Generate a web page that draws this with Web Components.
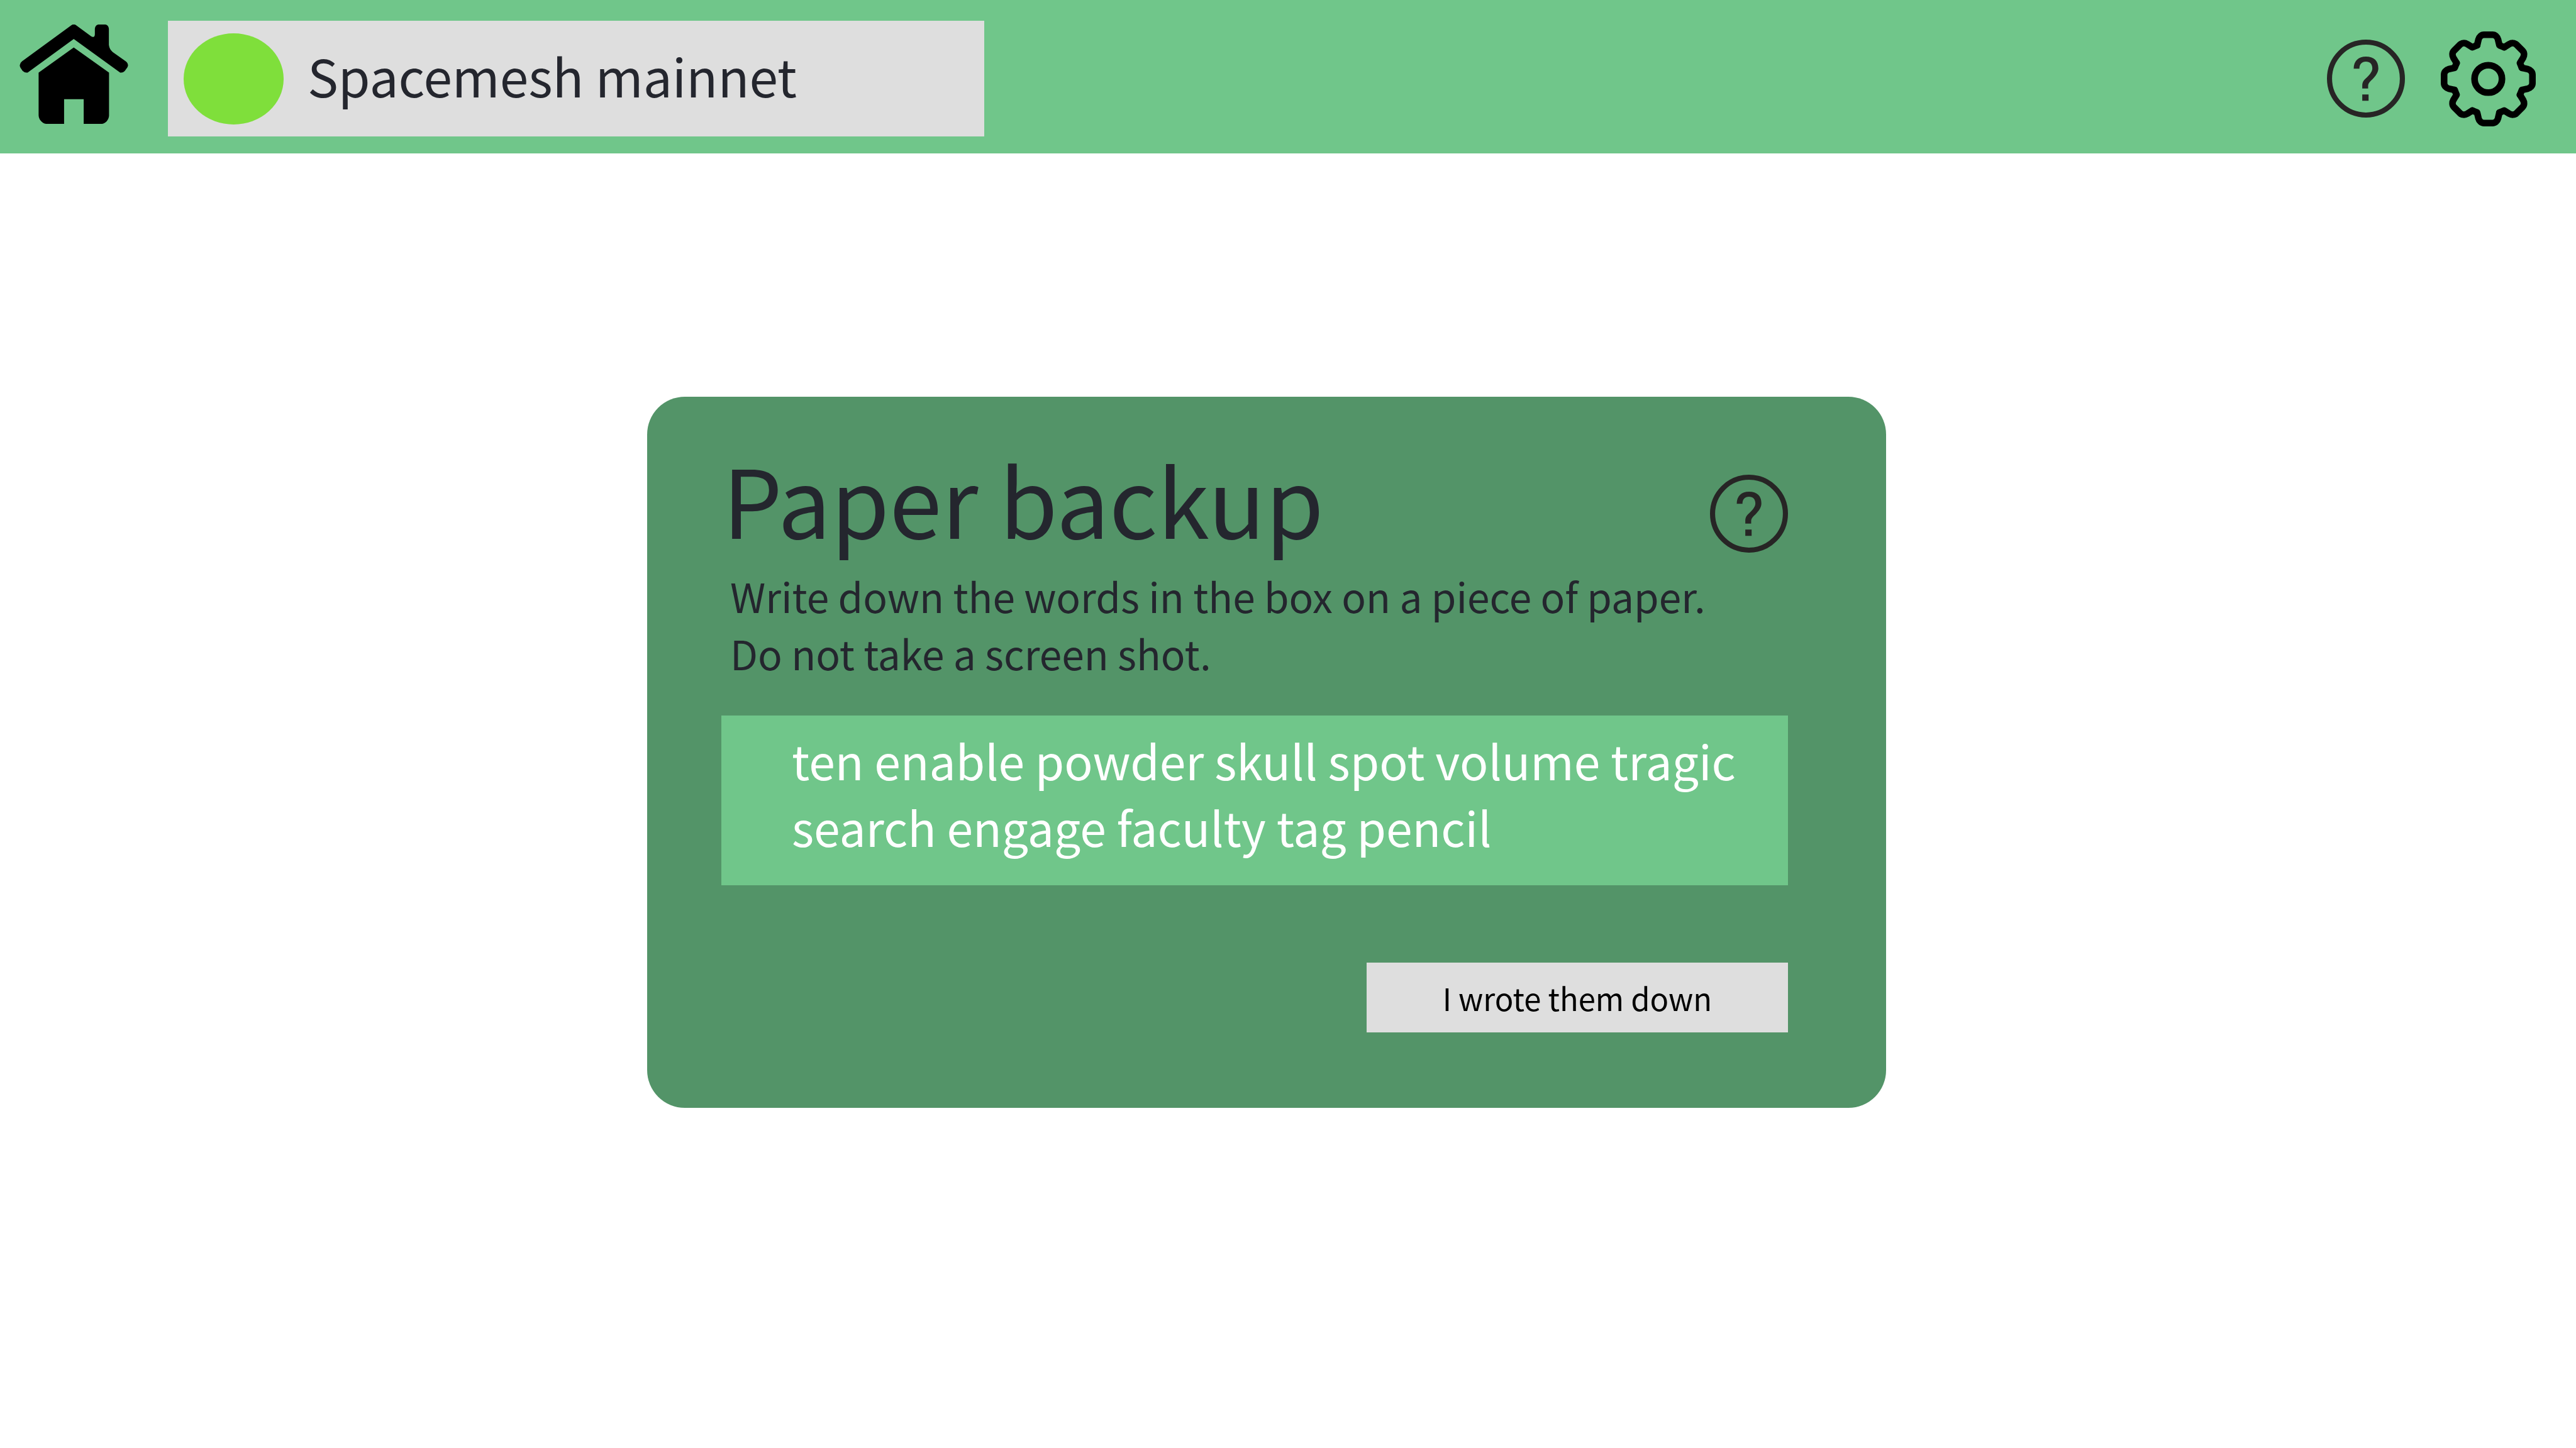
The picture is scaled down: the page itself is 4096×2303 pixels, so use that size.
<!DOCTYPE html>
<html lang="en">
<head>
<meta charset="utf-8">
<meta name="viewport" content="width=device-width, initial-scale=1">
<title>Paper backup</title>
<style>
  html, body { margin: 0; min-height: 100%; background: #ffffff; }
  body {
    font-family: "Noto Sans CJK SC", "Noto Sans", sans-serif;
    color: #24262e;
    --leaf: #70c68a;
    --moss: #539468;
    --stone: #dedede;
    --online: #7fdf3b;
  }
</style>
</head>
<body>
<wallet-app></wallet-app>

<template id="wallet-app">
  <style>
    :host { display: block; }
    /* The card column sits slightly left of the window's centre. */
    main {
      display: grid;
      grid-template-columns: 1029fr minmax(0, 1970fr) 1097fr;
      padding: 387px 0;
    }
    backup-card { grid-column: 2; }
  </style>
  <app-header>
    <network-status>Spacemesh mainnet</network-status>
  </app-header>
  <main>
    <backup-card>
      <span slot="title">Paper backup</span>
      <span slot="hint">Write down the words in the box on a piece of paper.<br>Do not take a screen shot.</span>
      <seed-words>ten enable powder skull spot volume tragic search engage faculty tag pencil</seed-words>
      <action-button slot="action">I wrote them down</action-button>
    </backup-card>
  </main>
</template>

<template id="app-header">
  <style>
    :host { display: block; }
    header {
      display: flex;
      align-items: center;
      padding: 33px 64px 27px 31px;
      background: var(--leaf);
    }
    a { display: block; align-self: flex-start; margin: 6px 63px 0 0; color: #000000; }
    a svg { display: block; width: 173px; height: 158px; }
    .tools { display: flex; align-items: center; gap: 57px; margin-left: auto; }
    ::slotted(network-status) { flex: 0 1 1298px; }
  </style>
  <header>
    <a href="#" aria-label="Home">
      <svg viewBox="42 42 718 659" fill="currentColor" aria-hidden="true">
        <path d="M388 44Q400 39 412 44L514 119Q526 128 534 123Q540 119 540 108V70Q542 46 563 42H610Q631 46 633 70V178Q637 208 658 224L742 284Q760 297 760 314Q758 325 750 334L738 351Q725 364 708 361L400 138L94 361Q75 364 61 350L48 331Q42 322 42 312Q44 296 57 286Z"/>
        <path d="M400 194L634 361V648C632 675 612 697 588 701H466V537H336V701H216C190 698 168 672 167 645V361Z"/>
      </svg>
    </a>
    <slot></slot>
    <div class="tools">
      <help-button></help-button>
      <settings-button></settings-button>
    </div>
  </header>
</template>

<template id="network-status">
  <style>
    :host {
      display: flex;
      align-items: center;
      gap: 38px;
      box-sizing: border-box;
      min-width: 0;
      height: 184px;
      padding: 0 25px;
      background: var(--stone);
      font-size: 82px;
      line-height: 120px;
      white-space: nowrap;
    }
    i { flex: none; width: 159px; height: 145px; border-radius: 50%; background: var(--online); }
    span { padding-bottom: 11px; }
  </style>
  <i></i><span><slot></slot></span>
</template>

<template id="help-button">
  <style>
    :host { display: block; flex: none; }
    button { display: block; padding: 0; border: 0; background: none; color: #272525; cursor: pointer; }
    svg { display: block; width: 124px; height: 124px; }
  </style>
  <button type="button" aria-label="Help">
    <svg viewBox="29 22 519 519" aria-hidden="true">
      <circle cx="288.500" cy="281.500" r="242.500" fill="none" stroke="currentColor" stroke-width="34"/>
      <path fill="currentColor" d="M207 216C207 164 239 135 288 135C341 135 371 163 371 213C371 242 350 266 331 287C315 303 303 312 303 332V347H264V332C264 309 270 297 285 283C307 261 331 238 331 213C331 184 315 168 288 168C261 168 245 185 245 216ZM264 387H306V429H264Z"/>
    </svg>
  </button>
</template>

<template id="settings-button">
  <style>
    :host { display: block; flex: none; }
    button { display: block; padding: 0; border: 0; background: none; color: #000000; cursor: pointer; }
    svg { display: block; width: 151px; height: 151px; }
  </style>
  <button type="button" aria-label="Settings">
    <svg viewBox="-315 -315 630 630" fill="none" stroke="currentColor" stroke-width="44" stroke-linecap="round" stroke-linejoin="round" aria-hidden="true">
      <defs>
        <path id="tooth" d="M-74 -223L-65 -261C-60 -280 -46 -293 -28 -293H28C46 -293 60 -280 65 -261L74 -223L106 -210"/>
      </defs>
      <use href="#tooth"/>
      <use href="#tooth" transform="rotate(45)"/>
      <use href="#tooth" transform="rotate(90)"/>
      <use href="#tooth" transform="rotate(135)"/>
      <use href="#tooth" transform="rotate(180)"/>
      <use href="#tooth" transform="rotate(225)"/>
      <use href="#tooth" transform="rotate(270)"/>
      <use href="#tooth" transform="rotate(315)"/>
      <circle r="91"/>
    </svg>
  </button>
</template>

<template id="backup-card">
  <style>
    :host {
      display: flex;
      flex-direction: column;
      box-sizing: border-box;
      padding: 51px 156px 120px 118px;
      border-radius: 60px;
      background: var(--moss);
    }
    .head { display: flex; align-items: flex-end; justify-content: space-between; }
    h1 { margin: 0; padding-left: 2px; font-size: 150px; font-weight: 400; line-height: 220px; }
    help-button { padding-bottom: 23px; }
    p { margin: 0; padding-left: 14px; font-size: 64px; line-height: 91px; }
    ::slotted(seed-words) { margin-top: 54px; }
    ::slotted(action-button) { align-self: flex-end; margin-top: 123px; }
  </style>
  <div class="head">
    <h1><slot name="title"></slot></h1>
    <help-button></help-button>
  </div>
  <p><slot name="hint"></slot></p>
  <slot></slot>
  <slot name="action"></slot>
</template>

<template id="seed-words">
  <style>
    :host {
      display: block;
      padding: 18px 70px 40px 112px;
      background: var(--leaf);
      color: #ffffff;
      font-size: 75px;
      line-height: 106px;
    }
  </style>
  <slot></slot>
</template>

<template id="action-button">
  <style>
    :host { display: block; }
    button {
      display: block;
      width: 670px;
      height: 111px;
      padding: 0;
      border: 0;
      background: var(--stone);
      color: #000000;
      font: inherit;
      font-size: 49px;
      line-height: 72px;
      cursor: pointer;
    }
  </style>
  <button type="button"><slot></slot></button>
</template>

<script>
  const define = (name) => customElements.define(name, class extends HTMLElement {
    constructor() {
      super();
      this.attachShadow({ mode: 'open' })
        .append(document.getElementById(name).content.cloneNode(true));
    }
  });

  ['help-button', 'settings-button', 'network-status', 'seed-words',
   'action-button', 'app-header', 'backup-card', 'wallet-app'].forEach(define);
</script>
</body>
</html>
